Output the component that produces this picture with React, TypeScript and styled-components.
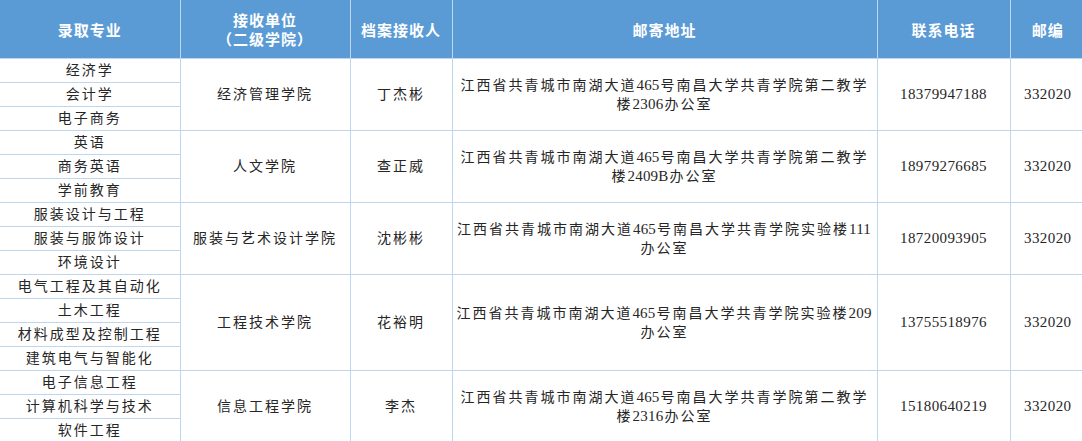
import React from "react";
import styled, { createGlobalStyle } from "styled-components";

const GlobalStyle = createGlobalStyle`
  html, body {
    margin: 0;
    padding: 0;
    background: #ffffff;
  }
  body {
    font-family: "Liberation Serif", "Noto Sans CJK SC", serif;
    overflow: hidden;
  }
`;

const Frame = styled.div`
  width: 1082px;
  height: 441px;
  overflow: hidden;
`;

const Table = styled.table`
  width: 1085px;
  table-layout: fixed;
  border-collapse: collapse;
  border-style: hidden;
`;

const HeadCell = styled.th`
  height: 58px;
  padding: 0;
  background: #5b9bd5;
  color: #ffffff;
  font-family: "Noto Sans CJK SC", sans-serif;
  font-weight: 700;
  font-size: 15px;
  letter-spacing: 1px;
  line-height: 19px;
  text-align: center;
  vertical-align: middle;
  border: 1px solid #bdd7ee;
  border-top: none;
`;

const Cell = styled.td<{ $num?: boolean }>`
  height: 23px;
  padding: 0 3px;
  color: #262626;
  font-family: "Liberation Serif", "Noto Sans CJK SC", serif;
  font-size: ${(p) => (p.$num ? "15px" : "14px")};
  letter-spacing: ${(p) => (p.$num ? "0.4px" : "2px")};
  line-height: 19px;
  text-align: center;
  vertical-align: middle;
  white-space: nowrap;
  border: 1px solid #bdd7ee;
`;

const Line = styled.div`
  display: block;
`;

const Digits = styled.span`
  font-size: 15px;
  letter-spacing: 0.2px;
  margin-right: 1px;
`;

type Group = {
  majors: string[];
  college: string;
  person: string;
  addr: string[];
  phone: string;
  zip: string;
};

const base = "江西省共青城市南湖大道465号南昌大学共青学院";

const groups: Group[] = [
  {
    majors: ["经济学", "会计学", "电子商务"],
    college: "经济管理学院",
    person: "丁杰彬",
    addr: [base + "第二教学", "楼2306办公室"],
    phone: "18379947188",
    zip: "332020",
  },
  {
    majors: ["英语", "商务英语", "学前教育"],
    college: "人文学院",
    person: "查正威",
    addr: [base + "第二教学", "楼2409B办公室"],
    phone: "18979276685",
    zip: "332020",
  },
  {
    majors: ["服装设计与工程", "服装与服饰设计", "环境设计"],
    college: "服装与艺术设计学院",
    person: "沈彬彬",
    addr: [base + "实验楼111", "办公室"],
    phone: "18720093905",
    zip: "332020",
  },
  {
    majors: ["电气工程及其自动化", "土木工程", "材料成型及控制工程", "建筑电气与智能化"],
    college: "工程技术学院",
    person: "花裕明",
    addr: [base + "实验楼209", "办公室"],
    phone: "13755518976",
    zip: "332020",
  },
  {
    majors: ["电子信息工程", "计算机科学与技术", "软件工程"],
    college: "信息工程学院",
    person: "李杰",
    addr: [base + "第二教学", "楼2316办公室"],
    phone: "15180640219",
    zip: "332020",
  },
];

const widths = [180, 170, 102, 425, 133, 75];

function renderMixed(text: string) {
  const parts = text.split(/([0-9A-Za-z]+)/).filter((s) => s.length > 0);
  return parts.map((p, i) =>
    /^[0-9A-Za-z]+$/.test(p) ? <Digits key={i}>{p}</Digits> : <React.Fragment key={i}>{p}</React.Fragment>
  );
}

export default function App() {
  return (
    <Frame>
      <GlobalStyle />
      <Table>
        <colgroup>
          {widths.map((w, i) => (
            <col key={i} style={{ width: w }} />
          ))}
        </colgroup>
        <thead>
          <tr>
            <HeadCell>录取专业</HeadCell>
            <HeadCell>
              <Line>接收单位</Line>
              <Line>（二级学院）</Line>
            </HeadCell>
            <HeadCell>档案接收人</HeadCell>
            <HeadCell>邮寄地址</HeadCell>
            <HeadCell>联系电话</HeadCell>
            <HeadCell>邮编</HeadCell>
          </tr>
        </thead>
        <tbody>
          {groups.map((g, gi) =>
            g.majors.map((m, mi) => (
              <tr key={`${gi}-${mi}`}>
                <Cell>{m}</Cell>
                {mi === 0 && (
                  <>
                    <Cell rowSpan={g.majors.length}>{g.college}</Cell>
                    <Cell rowSpan={g.majors.length}>{g.person}</Cell>
                    <Cell rowSpan={g.majors.length}>
                      {g.addr.map((l, li) => (
                        <Line key={li}>{renderMixed(l)}</Line>
                      ))}
                    </Cell>
                    <Cell $num rowSpan={g.majors.length}>
                      {g.phone}
                    </Cell>
                    <Cell $num rowSpan={g.majors.length}>
                      {g.zip}
                    </Cell>
                  </>
                )}
              </tr>
            ))
          )}
        </tbody>
      </Table>
    </Frame>
  );
}
